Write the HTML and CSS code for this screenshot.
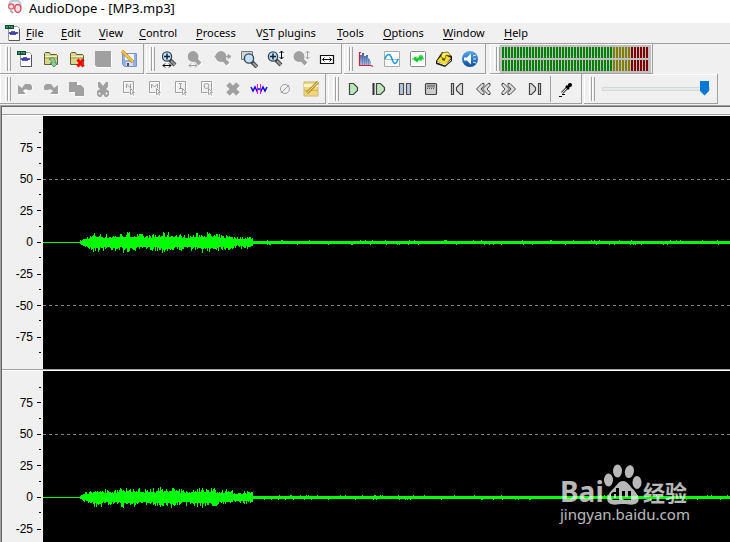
FILE: index.html
```html
<!DOCTYPE html>
<html lang="en">
<head>
<meta charset="utf-8">
<title>AudioDope - [MP3.mp3]</title>
<link rel="stylesheet" href="styles.css">
</head>
<body>
<svg class="defs" aria-hidden="true">
  <defs>
    <linearGradient id="blue" x2="0" y2="1"><stop offset="0" stop-color="#58a6e8"/><stop offset="1" stop-color="#0a4fa0"/></linearGradient>
    <linearGradient id="bars" x2="0" y2="1"><stop offset="0" stop-color="#3c5a9a"/><stop offset="1" stop-color="#a9c4ea"/></linearGradient>
    <symbol id="doc" viewBox="0 0 18 18">
      <path d="M4.500 2.500h9l2 2v12h-11z" fill="#fff" stroke="#999"/><path d="M15.500 5v11.500H5" fill="none" stroke="#555"/>
      <path d="M1 1h9v4H1z" fill="#06512f"/><path d="M3 2v2M5 2.500h1v1M8 2v2" stroke="#7fc29b" fill="none"/>
      <path d="M5 10l1-2 1 3 1-4 1 4 1-4 1 4 1-3 1 2 1-2" fill="none" stroke="#2a2aa0"/>
    </symbol>
    <symbol id="folder" viewBox="0 0 18 18">
      <path d="M2.500 14.500v-11l1-1h4l1 2h6l1 1v9z" fill="#d8d68c" stroke="#5f5f33"/><path d="M3 6.500h12" stroke="#f4f2b8"/><path d="M3 8h12" stroke="#9e9c5d"/>
    </symbol>
    <symbol id="lens" viewBox="0 0 18 18">
      <path d="M10 10l5 5" stroke="#444" stroke-width="4"/><path d="M11 11l4 4" stroke="#9a9a9a" stroke-width="2"/>
      <circle cx="7" cy="6.500" r="4.600" fill="#c6e1f7" stroke="#33475a" stroke-width="1.400"/>
    </symbol>
    <symbol id="lens-off" viewBox="0 0 18 18"><path d="M10 10l5 5" stroke="#fff" stroke-width="5"/><path d="M9 9l5 5" stroke="#a0a0a0" stroke-width="4"/><circle cx="7" cy="6.500" r="5.400" fill="#a0a0a0"/></symbol>
    <symbol id="page" viewBox="0 0 18 18">
      <path d="M4.500 2.500h10v11M4.500 2.500v11h6M11.500 9.500l4 4h-2l1 3h-2l-1-2z" fill="none" stroke="#fff"/>
      <path d="M3.500 1.500h10v9M3.500 1.500v11h6M10.500 8.500l4 4h-2l1 3M10.500 8.500v6l2-1" fill="none" stroke="#a0a0a0"/>
    </symbol>
    <symbol id="harrow" viewBox="0 0 18 18"><path d="M3 15.500h8M5 13.500l-2 2 2 2M9 13.500l2 2-2 2" fill="none" stroke="currentColor"/></symbol>
    <symbol id="varrow" viewBox="0 0 18 18"><path d="M15.500 1v8M13.500 3l2-2 2 2M13.500 7l2 2 2-2" fill="none" stroke="currentColor"/></symbol>
  </defs>
</svg>

<header class="titlebar">
  <svg class="app-icon" viewBox="0 0 16 16" aria-hidden="true"><path d="M2 8C1 2 4 0 8 1c4-1 7 2 6 7" fill="#eef2f7" stroke="#bdc8d6" stroke-width="2"/><ellipse cx="4" cy="7" rx="3.500" ry="3.500" fill="#e8606c"/><ellipse cx="11" cy="9" rx="4" ry="5" fill="#d94b58"/><ellipse cx="11" cy="9" rx="2.500" ry="3.500" fill="#f9dfe3"/><circle cx="4" cy="7" r="2" fill="#fbe4e7"/><path d="M3 11l3 3" stroke="#9baabd" stroke-width="2"/></svg>
  <h1 class="title">AudioDope - [MP3.mp3]</h1>
</header>

<nav class="menubar">
  <svg class="icon" aria-hidden="true"><use href="#doc"/></svg>
  <div class="menu">
    <button><u>F</u>ile</button><button><u>E</u>dit</button><button><u>V</u>iew</button><button><u>C</u>ontrol</button><button><u>P</u>rocess</button><button>V<u>S</u>T plugins</button><button><u>T</u>ools</button><button><u>O</u>ptions</button><button><u>W</u>indow</button><button><u>H</u>elp</button>
  </div>
</nav>

<section class="toolbars">
  <div class="toolbar">
    <div class="band file">
      <button aria-label="New"><svg class="icon"><use href="#doc"/></svg></button>
      <button aria-label="Open"><svg class="icon" viewBox="0 0 18 18"><use href="#folder"/><path d="M7 9c4-3 7 0 6 4h3l-4 4-4-4h2c0-2-1-3-3-4z" fill="#8ed09a" stroke="#3f7b50" stroke-width=".8"/></svg></button>
      <button aria-label="Close"><svg class="icon" viewBox="0 0 18 18"><use href="#folder"/><path d="M9.500 9.500l6 7M15.500 9.500l-6 7" stroke="#f00" stroke-width="3"/></svg></button>
      <button aria-label="Save"><svg class="icon" viewBox="0 0 18 18"><path d="M2 2h16v16H4l-2-2z" fill="#fff"/><path d="M1 1h16v16H3l-2-2z" fill="#a0a0a0"/></svg></button>
      <button aria-label="Save as"><svg class="icon" viewBox="0 0 18 18"><path d="M2.500 3.500h14v13h-12l-2-2z" fill="#8fb0ea" stroke="#7d92c6"/><path d="M5 4h9v6H5z" fill="#eef3fc"/><path d="M6 12h7v4H6z" fill="#d5def0"/><path d="M7 13h2v3H7z" fill="#456"/><path d="M2 1l11 11" stroke="#ad6b13" stroke-width="3"/><path d="M2 1l11 11" stroke="#ffc936" stroke-width="2"/></svg></button>
    </div>
    <div class="band zoom">
      <button aria-label="Zoom in horizontally"><svg class="icon" viewBox="2 0 18 18"><use href="#lens" width="18" height="18"/><path d="M4 6.500h6M7 3.500v6" stroke="#123" stroke-width="1.500"/><use href="#harrow" width="18" height="18"/></svg></button>
      <button class="off" aria-label="Zoom out horizontally"><svg class="icon" viewBox="2 0 18 18"><use href="#lens-off" width="18" height="18"/><use href="#harrow" width="18" height="18"/></svg></button>
      <button class="off" aria-label="Zoom full"><svg class="icon" viewBox="0 0 18 18"><use href="#lens-off"/><path d="M1 6.500l3-3v6zM17 6.500l-3-2v4zM12 6.500h4" fill="#a0a0a0" stroke="#a0a0a0"/></svg></button>
      <button aria-label="Zoom selection"><svg class="icon" viewBox="0 0 18 18"><path d="M1.500 1.500h11v8h-11z" fill="#d0d4d8" stroke="#777"/><use href="#lens" x="2" y="2" width="18" height="18"/></svg></button>
      <button aria-label="Zoom in vertically"><svg class="icon" viewBox="0 0 18 18"><use href="#lens"/><path d="M4 6.500h6M7 3.500v6" stroke="#123" stroke-width="1.500"/><use href="#varrow"/></svg></button>
      <button class="off" aria-label="Zoom out vertically"><svg class="icon" viewBox="0 0 18 18"><use href="#lens-off"/><use href="#varrow"/></svg></button>
      <button aria-label="Fit width"><svg class="icon" viewBox="0 0 18 18"><path d="M2.500 5.500h13v8h-13z" fill="#fff" stroke="#111" stroke-width="1.200"/><path d="M4.500 9.500h9M6.500 7.500l-2 2 2 2M11.500 7.500l2 2-2 2" fill="none" stroke="#111"/></svg></button>
    </div>
    <div class="band views">
      <button aria-label="Spectrum"><svg class="icon" viewBox="0 0 18 18"><path d="M3 15V5h2V3h2v3h2V5h2v4h2v2h1v4z" fill="url(#bars)"/><path d="M4 2.500H2.500v13H14l2 1" fill="none" stroke="#d01f38" stroke-width="1.200"/><path d="M5.500 5v10M7.500 6v9M9.500 6v9M11.500 8v7" stroke="#496497" stroke-width=".5"/></svg></button>
      <button aria-label="Waveform"><svg class="icon" viewBox="0 0 18 18"><path d="M1.500 1.500h15v15h-15z" fill="#fff" stroke="#aaa"/><path d="M2 9.500h14" stroke="#bbb"/><path d="M2 9C4 3 7 3 9 9s4 6 6 0" fill="none" stroke="#159be0" stroke-width="1.600"/></svg></button>
      <button aria-label="Levels"><svg class="icon" viewBox="0 0 18 18"><rect x="1.500" y="1.500" width="15" height="15" rx="1" fill="#fff" stroke="#888"/><path d="M3 9h2l1-2v4l1-3 1 4 1-4 1 2 1-5 1 6 1-5 1 3h1" fill="none" stroke="#0ec824" stroke-width="1.200"/></svg></button>
      <button aria-label="Batch"><svg class="icon" viewBox="0 0 18 18"><path d="M1 11l6-9 10 4v5l-7 6-9-3z" fill="#211f0c"/><path d="M2 11l6-7 8 4-6 7z" fill="#f5df31"/><path d="M7 3l6-1 3 4-5-1-1 4-4-2z" fill="#fff06a" stroke="#6c5a00" stroke-width=".8"/><path d="M2 12l8 3 6-5" fill="none" stroke="#eee"/><path d="M7 9l3 1" stroke="#665a11" stroke-width="2"/></svg></button>
      <button aria-label="Output"><svg class="icon" viewBox="0 0 18 18"><circle cx="9" cy="9" r="8" fill="url(#blue)"/><path d="M3 7.500h3l4-4v11l-4-4H3z" fill="#fff"/><path d="M12 6l3-1M12 9h3M12 12l3 1" stroke="#d4e9ff"/></svg></button>
    </div>
    <div class="band meter-band">
      <div class="meter" role="img" aria-label="Output level"><div class="channel-meter"><i class="low"></i><i class="mid"></i><i class="high"></i></div><div class="channel-meter"><i class="low"></i><i class="mid"></i><i class="high"></i></div></div>
    </div>
  </div>

  <div class="toolbar">
    <div class="band file">
      <button aria-label="Undo"><svg class="icon" viewBox="0 0 18 18"><path d="M3 6v9h8v-3h-1c1-2 3-3 7-3V7c-2-3-7-3-9 1z" fill="#fff"/><path d="M2 5v9h8l-3-3c2-2 3-2 5-1h3l1-1V6l-2-2H9L6 8z" fill="#a0a0a0"/></svg></button>
      <button aria-label="Redo"><svg class="icon" viewBox="0 0 18 18"><path d="M17 6v9H9v-1h7zM4 12h3" fill="#fff"/><path d="M16 5v9H8l3-3c-2-2-3-2-5-1H3L2 9V6l2-2h5l3 4z" fill="#a0a0a0"/></svg></button>
      <button aria-label="Copy"><svg class="icon" viewBox="0 0 18 18"><path d="M3 3h8l5 5v9H7v-4H3z" fill="#fff"/><path d="M1 2h8v3h4l3 3v8H7v-4H1z" fill="#a0a0a0"/></svg></button>
      <button aria-label="Cut"><svg class="icon" viewBox="0 0 18 18"><path d="M4 2h2l3 4 3-4h2v5l-2 2 3 2v4l-2 2h-2l-2-3-2 3H5l-2-2v-4l3-2-2-2z" fill="#a0a0a0"/><circle cx="5.500" cy="13.500" r="1" fill="#fff"/><circle cx="12.500" cy="13.500" r="1" fill="#fff"/></svg></button>
      <button aria-label="New selection"><svg class="icon" viewBox="0 0 18 18"><use href="#page"/><path d="M6.500 8V4l4 4V4" class="mark"/></svg></button>
      <button aria-label="Mix"><svg class="icon" viewBox="0 0 18 18"><use href="#page"/><path d="M5.500 8V4l3 3 3-3v4" class="mark"/></svg></button>
      <button aria-label="Insert"><svg class="icon" viewBox="0 0 18 18"><use href="#page"/><path d="M7 3.500h3M8.500 4v4M7 8.500h3" class="mark"/></svg></button>
      <button aria-label="Overwrite"><svg class="icon" viewBox="0 0 18 18"><use href="#page"/><circle cx="8.500" cy="6" r="2.500" class="mark"/></svg></button>
      <button aria-label="Delete"><svg class="icon" viewBox="0 0 18 18"><path d="M5 5l10 10M15 5L5 15" stroke="#fff" stroke-width="5"/><path d="M4 4l10 10M14 4L4 14" stroke="#a0a0a0" stroke-width="5"/></svg></button>
      <button aria-label="Trim"><svg class="icon" viewBox="0 0 18 18"><path d="M1 7l2 4 2-4 2 4 1-2h2l1 2 2-4 2 4 2-4" fill="none" stroke="#1010dc" stroke-width="1.500"/><path d="M7.500 4v10M10.500 4v10" stroke="#f0f"/></svg></button>
      <button aria-label="Silence"><svg class="icon" viewBox="0 0 18 18"><circle cx="9.500" cy="9.500" r="4.500" fill="none" stroke="#fff"/><circle cx="9" cy="9" r="4.500" fill="none" stroke="#999"/><path d="M5 13l8-8" stroke="#999"/></svg></button>
      <button aria-label="Edit notes"><svg class="icon" viewBox="0 0 18 18"><path d="M2 2h14v14H2z" fill="#f2d678" stroke="#c8b880"/><path d="M2 5.500h14" stroke="#fff5cb" stroke-width="3"/><path d="M2 10.500h14" stroke="#d9b747"/><path d="M5 13L16 2" stroke="#6b5a24" stroke-width="2.500"/><path d="M5 13L16 2" stroke="#ffd85b" stroke-width="1.500"/></svg></button>
    </div>
    <div class="band transport">
      <button aria-label="Play"><svg class="icon" viewBox="0 0 18 18"><path d="M5.500 3.500h4l4 4v3l-4 4h-4z" fill="#b9e8bb" stroke="#444" stroke-width="1.200"/></svg></button>
      <button aria-label="Play from start"><svg class="icon" viewBox="0 0 18 18"><path d="M3.500 3v12" stroke="#333" stroke-width="2"/><path d="M6.500 3.500h4l4 4v3l-4 4h-4z" fill="#b9e8bb" stroke="#444" stroke-width="1.200"/></svg></button>
      <button aria-label="Pause"><svg class="icon" viewBox="0 0 18 18"><path d="M3.500 3.500h4v11h-4zM10.500 3.500h4v11h-4z" fill="#b8c9e8" stroke="#4b4b4b" stroke-width="1.200"/></svg></button>
      <button aria-label="Stop"><svg class="icon" viewBox="0 0 18 18"><rect x="3.500" y="3.500" width="11" height="11" rx="1" fill="#ccc" stroke="#444" stroke-width="1.200"/><path d="M5 6h8" stroke="#888" stroke-width="3"/><path d="M5 8.500h8" stroke="#555" stroke-dasharray="1 1"/></svg></button>
      <button aria-label="Start"><svg class="icon" viewBox="0 0 18 18"><path d="M3.500 3.500h2v11h-2zM14.500 3.500v11h-2l-4-4v-3l4-4z" fill="#ddd" stroke="#444" stroke-width="1.200"/></svg></button>
      <button aria-label="Rewind"><svg class="icon" viewBox="0 0 18 18"><path d="M8 3.500L2.500 9 8 14.500h2v-2L7 9l3-3.500v-2zM14 3.500L8.500 9l5.500 5.500h2v-2L13 9l3-3.500v-2z" fill="#ddd" stroke="#444"/></svg></button>
      <button aria-label="Forward"><svg class="icon" viewBox="0 0 18 18"><path d="M4 3.500L9.500 9 4 14.500H2v-2L5 9 2 5.500v-2zM10 3.500L15.500 9 10 14.500H8v-2L11 9 8 5.500v-2z" fill="#ddd" stroke="#444"/></svg></button>
      <button aria-label="End"><svg class="icon" viewBox="0 0 18 18"><path d="M12.500 3.500h2v11h-2zM3.500 3.500v11h2l4-4v-3l-4-4z" fill="#ddd" stroke="#444" stroke-width="1.200"/></svg></button>
      <span class="divider"></span>
      <button aria-label="Record"><svg class="icon" viewBox="0 0 18 18"><path d="M5 13l5-5" stroke="#555" stroke-width="3"/><path d="M5 13l5-5" stroke="#ddd"/><path d="M9 6l3 3M11 7l3-3" stroke="#000" stroke-width="2.500"/><circle cx="13" cy="5" r="2"/><path d="M2 16.500h3M5 14.500h3" stroke="#000"/></svg></button>
    </div>
    <div class="band volume-band"><input class="volume" type="range" min="0" max="100" value="100" aria-label="Volume"></div>
  </div>
</section>

<main class="editor">
  <div class="overview"></div>
  <section class="channel">
    <ol class="scale"><li>75</li><li>50</li><li>25</li><li>0</li><li>-25</li><li>-50</li><li>-75</li></ol>
    <svg class="wave" data-seed="7" role="img" aria-label="Left channel"><path class="guide" d="M0 63.500H3000M0 189.500H3000"/><path class="signal"/></svg>
  </section>
  <section class="channel">
    <ol class="scale"><li>75</li><li>50</li><li>25</li><li>0</li><li>-25</li></ol>
    <svg class="wave" data-seed="23" role="img" aria-label="Right channel"><path class="guide" d="M0 63.500H3000M0 189.500H3000"/><path class="signal"/></svg>
  </section>
  <div class="watermark">
    <div class="brand"><span class="bai">Bai</span><svg class="paw" viewBox="0 0 40 42" aria-hidden="true"><g fill="currentColor"><ellipse cx="5.500" cy="17" rx="4.500" ry="6.500"/><ellipse cx="14.500" cy="8" rx="4.500" ry="6.500"/><ellipse cx="26.500" cy="8.500" rx="4.500" ry="6.500" transform="rotate(12 26 8)"/><ellipse cx="34" cy="19.500" rx="4.500" ry="6.500"/><path fill-rule="evenodd" d="M20 18c-5 0-7 6-11 9-4 4-7 9-3 13 4 3 9 1 14 1s10 2 14-1c4-4 0-9-3-13-4-3-6-9-11-9zM16 25v12h-5q-3 0-3-4t3-4h2v-4zm-3 6h-2v4h2zM19 28h3v6h3v-6h3v9h-7l-2-2z"/></g></svg><span class="jing">经验</span></div>
    <div class="site">jingyan.baidu.com</div>
  </div>
</main>
<script src="wave.js"></script>
</body>
</html>
```
FILE: styles.css
```css
* { box-sizing: border-box; }
body {
  margin: 0;
  height: 100vh;
  overflow: hidden;
  display: flex;
  flex-direction: column;
  background: #f0f0f0;
  color: #000;
  font: 11px/16px "Noto Sans", "Open Sans", sans-serif;
}
button {
  padding: 0;
  border: 0;
  background: none;
  color: inherit;
  font: inherit;
}
.defs { position: absolute; width: 0; height: 0; }
.icon { display: block; width: 18px; height: 18px; flex: none; }

.titlebar {
  display: flex;
  align-items: flex-start;
  gap: 6px;
  height: 23px;
  padding-left: 7px;
  background: #fff;
}
.app-icon { width: 16px; height: 15px; }
.title { margin: 0; font-size: 13px; font-weight: 400; line-height: 16px; }

.menubar {
  display: flex;
  align-items: center;
  gap: 4px;
  height: 20px;
  padding-left: 4px;
}
.menu {
  display: grid;
  grid-template-columns: 35px 38px 40px 57px 60px 81px 46px 60px 61px auto;
}
.menu button { text-align: left; white-space: nowrap; }
.menu u { text-underline-offset: 2px; }

.toolbars { border-top: 1px solid #a0a0a0; padding-bottom: 1px; }
.toolbar { display: flex; height: 30px; }
.band {
  display: flex;
  align-items: center;
  position: relative;
  padding: 0 1px 0 12px;
  margin-right: 2px;
  border: solid #a0a0a0;
  border-width: 0 1px 1px 0;
  box-shadow: inset 1px 1px #fff;
}
.band button { width: 26px; height: 26px; display: grid; place-items: center; }
.band::before {
  content: "";
  position: absolute;
  left: 5px;
  top: 3px;
  bottom: 2px;
  width: 6px;
  background: linear-gradient(90deg, #fff 1px, #f0f0f0 1px 2px, #a0a0a0 2px 3px, #fff 3px 4px, #f0f0f0 4px 5px, #a0a0a0 5px 6px);
}
.band.zoom::before,
.band.views::before { left: 3px; }
.band.views { padding: 0 2px 0 9px; }
.band.transport { padding-right: 2px; }
.off { color: #a0a0a0; }
.mark { fill: none; stroke: #a0a0a0; }
.divider { width: 1px; height: 26px; margin: 0 2px; background: #a0a0a0; }

.band.meter-band { margin-left: 2px; padding: 0 1px 0 10px; }
.band.meter-band::before { left: 4px; }
.meter {
  display: grid;
  gap: 2px;
  padding: 2px;
  background: #c0c0c0;
}
.channel-meter { display: flex; height: 11px; }
.channel-meter i { background: repeating-linear-gradient(90deg, var(--lamp) 0 2px, #c0c0c0 2px 3px); }
.low { --lamp: #008000; width: 111px; }
.mid { --lamp: #808000; width: 18px; }
.high { --lamp: #800000; width: 18px; }

.band.volume-band { padding: 0 7px 0 18px; }
.volume {
  appearance: none;
  width: 108px;
  height: 18px;
  margin: 0;
  background: none;
}
.volume::-webkit-slider-runnable-track {
  height: 4px;
  background: #e7eaea;
  border: 1px solid #d6d6d6;
}
.volume::-webkit-slider-thumb {
  appearance: none;
  width: 9px;
  height: 15px;
  margin-top: -7px;
  background: #0078d7;
  clip-path: polygon(0 0, 100% 0, 100% 70%, 50% 100%, 0 70%);
}

.editor {
  flex: 1;
  min-height: 0;
  position: relative;
  overflow: hidden;
  border: solid #a0a0a0;
  border-width: 1px 0 0 1px;
  box-shadow: inset 1px 1px #696969;
  padding: 1px 0 0 1px;
}
.overview { height: 9px; border-bottom: 1px solid #fff; box-shadow: inset 0 -1px #a0a0a0; }
.channel {
  display: flex;
  height: 255px;
  border-bottom: 1px solid #fff;
  box-shadow: inset 0 -1px #a0a0a0;
  padding-bottom: 1px;
}
.scale {
  display: grid;
  grid-template-rows: repeat(7, 1fr);
  width: 41px;
  margin: 0;
  padding: 16px 2px 16px 0;
  list-style: none;
  font-family: "Liberation Sans", Arial, sans-serif;
  font-size: 12px;
  line-height: 14px;
}
.scale li {
  position: relative;
  display: flex;
  align-items: center;
  justify-content: flex-end;
  gap: 4px;
}
.scale li::after { content: ""; width: 4px; height: 1px; background: #000; }
.scale li::before,
.scale li:first-child {
  background: linear-gradient(#000, #000) top right / 2px 1px no-repeat;
}
.scale li::before { content: ""; position: absolute; right: 0; bottom: 0; width: 2px; height: 1px; }
.wave { flex: 1; min-width: 0; height: 253px; background: #000; overflow: hidden; }
.guide { stroke: #808080; stroke-dasharray: 3 3; }
.signal { fill: #0f0; shape-rendering: crispEdges; }

.watermark {
  position: absolute;
  right: 40px;
  top: 356px;
  width: 130px;
  color: #fff;
  opacity: .72;
}
.brand { display: flex; align-items: flex-end; height: 43px; }
.bai { width: 43px; font: 700 28px/27px "Noto Sans", sans-serif; }
.paw { width: 40px; height: 42px; flex: none; }
.jing { font: 700 22px/27px "Noto Sans CJK SC", sans-serif; white-space: nowrap; }
.site { font: 15px/19px "Noto Sans", sans-serif; }
```
FILE: wave.js
```js
// Builds the peak outline of each channel, one column per pixel.
const centre = 126;

function envelope(x) {
  if (x < 37) return 0;
  if (x < 50) return 1.5 + (x - 37) * 0.35;
  if (x < 190) return 6 + Math.sin(x / 6) * 0.8;
  if (x < 198) return 3.5;
  if (x < 210) return 4;
  return 1;
}

document.querySelectorAll('.wave').forEach((svg) => {
  let state = Number(svg.dataset.seed);
  const random = () => {
    state = (state * 16807) % 2147483647;
    return state / 2147483647;
  };
  random();
  let path = '';
  for (let x = 0; x < 3000; x++) {
    const size = envelope(x);
    let up = size;
    let down = size;
    if (size > 1) {
      up = size * (0.75 + Math.pow(random(), 2) * 0.8);
      down = size * (0.7 + Math.pow(random(), 2.2) * 0.8);
    } else if (size === 1) {
      up = random() > 0.93 ? 2 : 1;
      down = random() > 0.93 ? 2 : 1;
    }
    up = Math.round(up);
    down = Math.round(down);
    path += `M${x} ${centre - up}h1v${up + down + 1}h-1z`;
  }
  svg.querySelector('.signal').setAttribute('d', path);
});
```
